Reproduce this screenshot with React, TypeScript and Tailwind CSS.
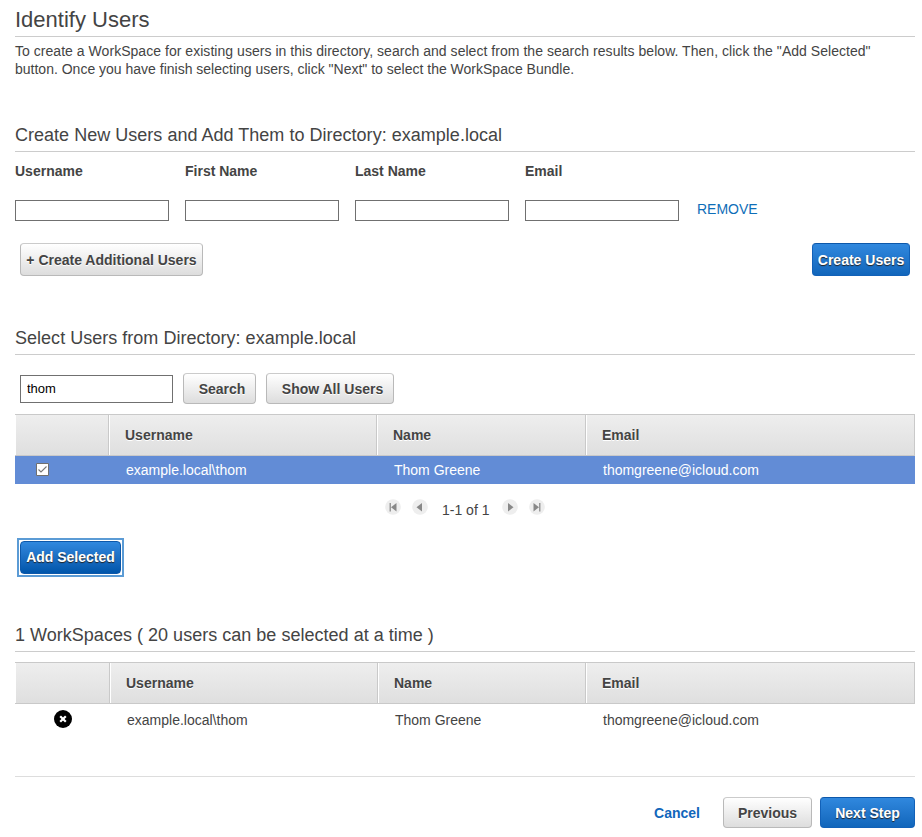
import type { ReactNode } from "react";

const buttonBase =
  "flex shrink-0 items-center justify-center whitespace-nowrap rounded border bg-linear-to-b font-bold";
const grayButton = `${buttonBase} border-[#b9b9b9] border-t-[#cbcbcb] from-white to-[#dddddd] text-[#444] [text-shadow:0_1px_0_#fff]`;
const blueButton = `${buttonBase} border-[#1261b8] border-t-[#0d58aa] from-[#3088de] to-[#1166bb] text-white [text-shadow:0_1px_1px_#222]`;
const focusedButton = `${buttonBase} border-[#0d58aa] from-[#3088de] to-[#0055aa] text-white [text-shadow:0_1px_1px_#222]`;
const headCell =
  "flex items-center border-y border-r border-[#c9c9c9] bg-linear-to-b from-[#eeeeee] to-[#dfdfdf] shadow-[inset_1px_0_0_#fff] pl-4 font-bold [text-shadow:0_1px_0_#fff]";

function SectionTitle({ children }: { children: ReactNode }) {
  return (
    <h2 className="flex h-[34px] items-center whitespace-nowrap border-b border-[#cccccc] text-[18px] tracking-[0.02px]">
      {children}
    </h2>
  );
}

function HeaderRow({ columns }: { columns: string }) {
  return (
    <div className={`grid h-[42px] ${columns}`}>
      {["", "Username", "Name", "Email"].map((label) => (
        <div key={label} className={headCell}>
          {label}
        </div>
      ))}
    </div>
  );
}

function PagerButton({ back, end }: { back?: boolean; end?: boolean }) {
  return (
    <button className="size-4">
      <svg
        viewBox="0 0 16 16"
        width="16"
        height="16"
        className={back ? "block" : "block -scale-x-100"}
      >
        <circle cx="8" cy="8" r="7.8" fill="#eeeeee" />
        {end ? (
          <>
            <path d="M4.5 4H6v8.5H4.5z" fill="#999" />
            <path d="M11.5 4v8.5L6 8.2z" fill="#888" />
          </>
        ) : (
          <path d="M10 4v8.5L4.5 8.2z" fill="#888" />
        )}
      </svg>
    </button>
  );
}

export default function App() {
  return (
    <main className="h-[837px] w-[922px] overflow-hidden bg-white pl-[15px] pr-[7px] font-['Liberation_Sans',Arial,sans-serif] text-[14px] leading-[18px] text-[#444444]">
      <h1 className="flex h-[37px] items-center border-b border-[#cccccc] pt-1 text-[22px]">
        Identify Users
      </h1>
      <p className="mt-[5px] whitespace-nowrap">
        <span className="tracking-[0.038px]">
          To create a WorkSpace for existing users in this directory, search and select from the
          search results below. Then, click the "Add Selected"
        </span>
        <br />
        button. Once you have finish selecting users, click "Next" to select the WorkSpace Bundle.
      </p>

      <section className="mt-10">
        <SectionTitle>Create New Users and Add Them to Directory: example.local</SectionTitle>
        <div className="mt-[10px] flex">
          {["Username", "First Name", "Last Name", "Email"].map((label) => (
            <label key={label} className="w-[170px] font-bold">
              {label}
              <input className="mt-5 block h-[21px] w-[154px] border border-[#707070] bg-white" />
            </label>
          ))}
          <a className="ml-[2px] mt-[38px] text-[#0e6eb8]">REMOVE</a>
        </div>
        <div className="mt-[22px] flex justify-between px-[5px]">
          <button className={`${grayButton} h-[33px] w-[183px]`}>+ Create Additional Users</button>
          <button className={`${blueButton} h-[33px] w-[98px]`}>Create Users</button>
        </div>
      </section>

      <section className="mt-[45px]">
        <SectionTitle>Select Users from Directory: example.local</SectionTitle>
        <div className="mt-[18px] flex h-[31px] items-center pl-[5px]">
          <input
            defaultValue="thom"
            className="h-7 w-[153px] border border-[#707070] pl-[6px] text-[13px] text-black"
          />
          <button className={`${grayButton} ml-[10px] h-[31px] w-[73px] pl-[5px]`}>Search</button>
          <button className={`${grayButton} ml-[10px] h-[31px] w-32 pl-[5px]`}>
            Show All Users
          </button>
        </div>
        <div className="mt-[10px]">
          <HeaderRow columns="grid-cols-[94px_268px_209px_329px]" />
          <div className="grid h-7 grid-cols-[94px_268px_209px_329px] items-center bg-[#628cd6] text-white">
            <div className="pl-[21px]">
              <svg viewBox="0 0 13 13" width="13" height="13" className="-mt-px block">
                <path d="M.5.5h12v12H.5z" fill="#fff" stroke="#707070" />
                <path d="M2.5 6.5 5 9l5.5-5.5" fill="none" stroke="#777" strokeWidth="1.1" />
              </svg>
            </div>
            <div className="pl-[17px]">example.local\thom</div>
            <div className="pl-[17px]">Thom Greene</div>
            <div className="pl-[17px]">thomgreene@icloud.com</div>
          </div>
        </div>
        <div className="mt-[15px] flex h-[18px] pl-[370px]">
          <PagerButton back end />
          <div className="ml-[11px]">
            <PagerButton back />
          </div>
          <span className="ml-[14px] w-[60px] pt-[2px]">1-1 of 1</span>
          <PagerButton />
          <div className="ml-[11px]">
            <PagerButton end />
          </div>
        </div>
        <div className="ml-[2px] mt-[21px] h-[39px] w-[107px] border-2 border-[#5b9bd5] p-px">
          <button className={`${focusedButton} h-[33px] w-[101px] pb-0.5`}>Add Selected</button>
        </div>
      </section>

      <section className="mt-[41px]">
        <SectionTitle>1 WorkSpaces ( 20 users can be selected at a time )</SectionTitle>
        <div className="mt-[10px]">
          <HeaderRow columns="grid-cols-[95px_268px_208px_329px]" />
          <div className="grid h-8 grid-cols-[95px_268px_208px_329px] items-center">
            <div className="pl-[39px]">
              <svg viewBox="0 0 18 18" width="18" height="18" className="-mt-0.5 block">
                <circle cx="9" cy="9" r="9" fill="#000" />
                <path d="m6.2 6.2 5.6 5.6m0-5.6-5.6 5.6" stroke="#fff" strokeWidth="2.2" />
              </svg>
            </div>
            <div className="pl-[17px]">example.local\thom</div>
            <div className="pl-[17px]">Thom Greene</div>
            <div className="pl-[17px]">thomgreene@icloud.com</div>
          </div>
        </div>
      </section>

      <footer className="mt-10 flex items-center justify-end border-t border-[#dddddd] pt-5">
        <a className="mr-[23px] font-bold text-[#1166bb]">Cancel</a>
        <button className={`${grayButton} mr-2 h-[31px] w-[89px]`}>Previous</button>
        <button className={`${blueButton} h-[31px] w-[95px]`}>Next Step</button>
      </footer>
    </main>
  );
}
